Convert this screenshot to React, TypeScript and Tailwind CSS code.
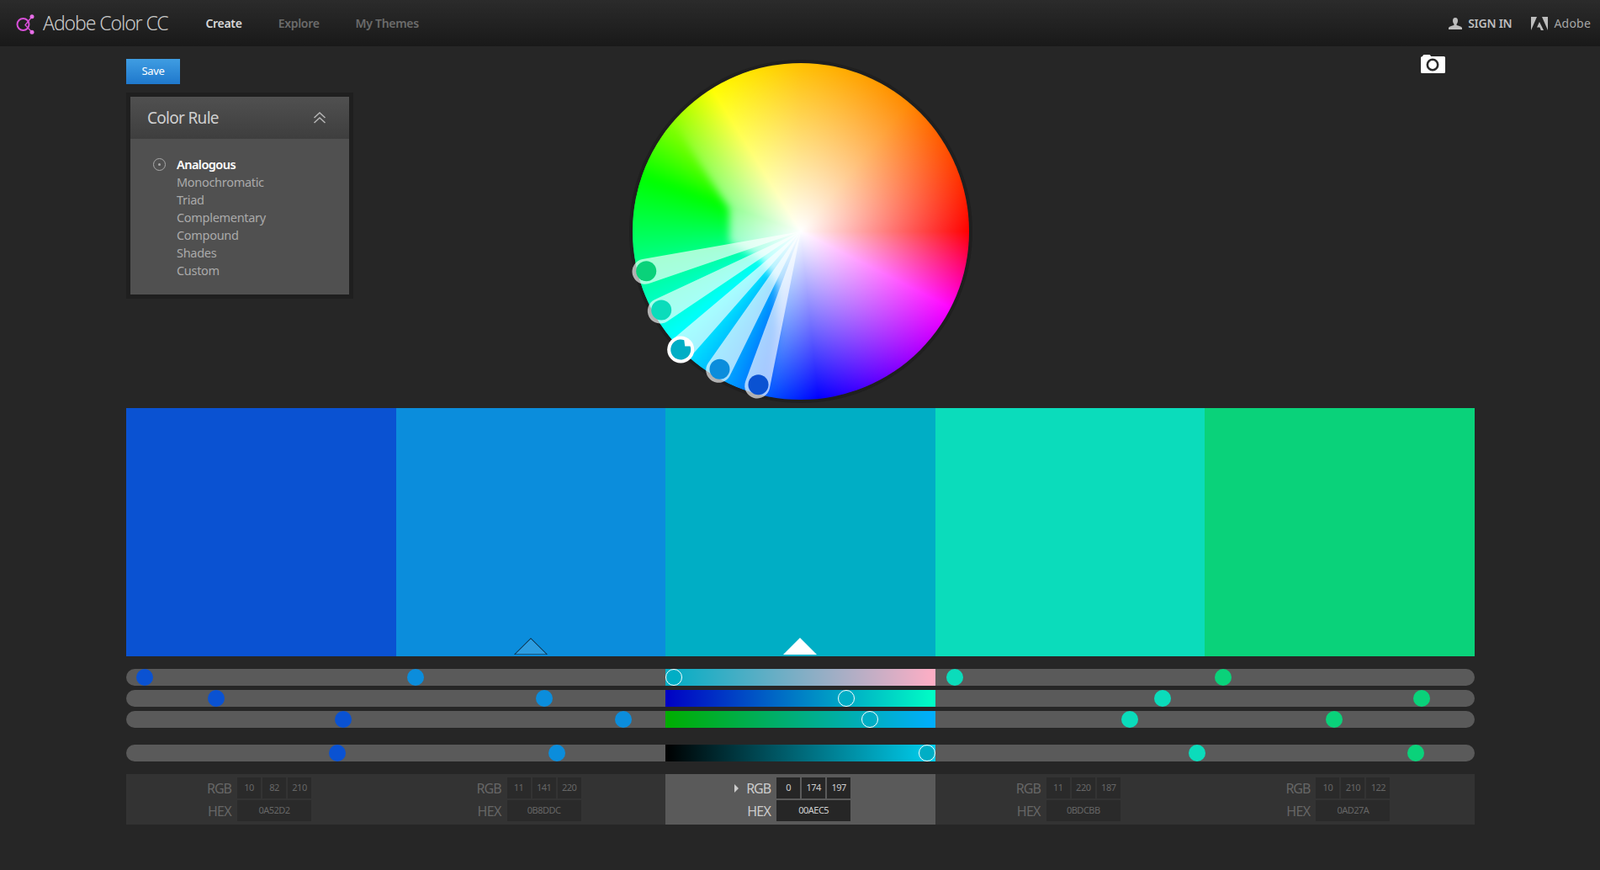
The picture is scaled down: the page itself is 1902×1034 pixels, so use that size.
const CX = 205;
const CY = 205;

// handles, in wheel coordinates (ring = outer circle, dot = colour)
const handles = [
  { ring: [19.5, 252.8], dot: [21.2, 252.2], color: "#0AD27A" },
  { ring: [37.8, 299.5], dot: [39.2, 298.5], color: "#0BDCBB" },
  { ring: [61.8, 345.2], dot: [62.2, 345.5], color: "#00AEC5", active: true },
  { ring: [107.2, 369.8], dot: [108.5, 368.8], color: "#0B8DDC" },
  { ring: [153.2, 388.5], dot: [154.5, 387.2], color: "#0A52D2" },
];

function spokePath(px: number, py: number, r: number) {
  const dx = px - CX;
  const dy = py - CY;
  const d = Math.hypot(dx, dy);
  const a = Math.atan2(dy, dx);
  const al = Math.asin(r / d);
  const len = Math.sqrt(d * d - r * r);
  const x1 = CX + len * Math.cos(a + al);
  const y1 = CY + len * Math.sin(a + al);
  const x2 = CX + len * Math.cos(a - al);
  const y2 = CY + len * Math.sin(a - al);
  return `M${CX} ${CY} L${x1} ${y1} A${r} ${r} 0 1 0 ${x2} ${y2} Z`;
}

function Wheel() {
  return (
    <div className="relative mt-[20px] h-[400px] w-[400px] rounded-full shadow-[0_0_0_4px_#1f1f1f]">
      <div className="absolute inset-0 overflow-hidden rounded-full bg-[conic-gradient(from_0deg,#ffc000_0deg,#ff8800_40deg,#ff0000_90deg,#ff00ff_117deg,#a000ff_139deg,#0000ff_174deg,#00a0ff_206deg,#00ffff_230deg,#00ff90_257deg,#00ff00_289deg,#ffff00_328deg,#ffc000_360deg)]">
        <div className="absolute inset-0 bg-[radial-gradient(circle_closest-side,#ffffff_0%,rgba(255,255,255,0)_100%)]" />
        {/* the saturated patch through the greens and cyans */}
        <div className="absolute inset-0 blur-[5px]">
          <div className="absolute inset-0 bg-[conic-gradient(from_0deg,#ffc000_0deg,#ff8800_40deg,#ff0000_90deg,#ff00ff_117deg,#a000ff_139deg,#0000ff_174deg,#00a0ff_206deg,#00ffff_230deg,#00ff90_257deg,#00ff00_289deg,#ffff00_328deg,#ffc000_360deg)] [clip-path:polygon(0%_19%,13%_19.3%,28.8%_43.4%,28.8%_53.4%,38%_58%,43%_66%,43%_80%,40%_100%,0%_100%)]" />
        </div>
      </div>
      <svg className="absolute -left-[5px] -top-[5px] overflow-visible" width="410" height="410" viewBox="0 0 410 410">
        {handles.map((h) => (
          <path key={h.color} d={spokePath(h.ring[0], h.ring[1], 15)} fill="#fff" fillOpacity={0.65} />
        ))}
        {handles.map((h) =>
          h.active ? (
            <g key={h.color} transform={`translate(${h.dot[0]} ${h.dot[1]})`}>
              <circle r="16" fill="#fff" />
              <path d="M5 -4 L11.3 -4.1 A12 12 0 1 1 4.1 -11.3 Z" fill={h.color} />
            </g>
          ) : (
            <circle key={h.color} cx={h.dot[0]} cy={h.dot[1]} r="12" fill={h.color} />
          )
        )}
      </svg>
    </div>
  );
}

const swatches = ["#0A52D2", "#0B8DDC", "#00AEC5", "#0BDCBB", "#0AD27A"];

const sliders = [
  {
    gradient: "bg-[linear-gradient(to_right,#00aec5,#ffaec5)]",
    knob: 650.5,
    dots: [21.5, 343.8, 984.8, 1304],
    className: "",
  },
  {
    gradient: "bg-[linear-gradient(to_right,#0000c5,#00ffc5)]",
    knob: 856,
    dots: [107, 496.5, 1231.5, 1539.5],
    className: "mt-[5px]",
  },
  {
    gradient: "bg-[linear-gradient(to_right,#00ae00,#00aeff)]",
    knob: 884,
    dots: [257.7, 590.8, 1192.8, 1435.5],
    className: "mt-[5px]",
  },
  {
    gradient: "bg-[linear-gradient(to_right,#000000,#00d0f0)]",
    knob: 952,
    dots: [251, 511.8, 1272.8, 1533],
    className: "mt-[20px]",
  },
];

const dotColors = ["#0A52D2", "#0B8DDC", "#0BDCBB", "#0AD27A"];

const infos = [
  { rgb: ["10", "82", "210"], hex: "0A52D2" },
  { rgb: ["11", "141", "220"], hex: "0B8DDC" },
  { rgb: ["0", "174", "197"], hex: "00AEC5", active: true },
  { rgb: ["11", "220", "187"], hex: "0BDCBB" },
  { rgb: ["10", "210", "122"], hex: "0AD27A" },
];

const rules = ["Monochromatic", "Triad", "Complementary", "Compound", "Shades", "Custom"];

function Slider({ s }: { s: (typeof sliders)[number] }) {
  return (
    <div className={`relative grid h-5 grid-cols-5 rounded-full bg-[#5a5a5a] ${s.className}`}>
      <div className={`col-start-3 h-5 ${s.gradient}`} />
      {s.dots.map((x, i) => (
        <span
          key={i}
          className="absolute top-0 h-5 w-5 -translate-x-1/2 rounded-full"
          style={{ left: x, backgroundColor: dotColors[i] }}
        />
      ))}
      <span
        className="absolute top-0 h-5 w-5 -translate-x-1/2 rounded-full border border-white bg-[#00aec5]"
        style={{ left: s.knob }}
      />
    </div>
  );
}

function Info({ rgb, hex, active }: { rgb: string[]; hex: string; active?: boolean }) {
  const box = active ? "bg-[#262626] text-[#cfcfcf]" : "bg-[#2a2a2a] text-[#666666]";
  const label = active ? "text-[#cccccc]" : "text-[#666666]";
  return (
    <div className={`flex h-[60px] flex-col gap-[2px] pt-[4px] ${active ? "bg-[#5a5a5a]" : "bg-[#333333]"}`}>
      <div className="flex h-[25px] items-center">
        <div className={`relative w-[125px] text-right text-[16px] tracking-[-1px] ${label}`}>
          {active && (
            <span className="absolute left-[82px] top-[7px] h-0 w-0 border-y-[5px] border-l-[5px] border-y-transparent border-l-[#cccccc]" />
          )}
          RGB
        </div>
        <div className="ml-[7px] flex gap-[2px]">
          {rgb.map((v) => (
            <div key={v} className={`flex h-[25px] w-[28px] items-center justify-center text-[11px] tracking-[-0.5px] ${box}`}>
              {v}
            </div>
          ))}
        </div>
      </div>
      <div className="flex h-[25px] items-center">
        <div className={`w-[125px] text-right text-[16px] tracking-[-0.7px] ${label}`}>HEX</div>
        <div className={`ml-[7px] flex h-[25px] w-[88px] items-center justify-center text-[11px] tracking-[-0.5px] ${box}`}>
          {hex}
        </div>
      </div>
    </div>
  );
}

export default function App() {
  return (
    <div className="min-h-screen bg-[#262626] font-['Open_Sans',sans-serif]">
      {/* Top bar */}
      <header className="flex h-[55px] items-center bg-[linear-gradient(to_bottom,#2b2b2b,#191919)] pl-[18px] pr-[11px]">
        <svg width="24" height="26" viewBox="0 0 24 26" className="shrink-0">
          <circle cx="9.5" cy="14" r="7" fill="none" stroke="#d84fd8" strokeWidth="2" />
          <path d="M20 4.7 L12 14.7 L20 23.3" fill="none" stroke="#d84fd8" strokeWidth="1.4" />
          <circle cx="20" cy="4.7" r="2.5" fill="#e86fe8" />
          <circle cx="20" cy="23.3" r="2.5" fill="#e86fe8" />
        </svg>
        <div className="ml-[9px] text-[23px] font-light tracking-[-1.1px] text-[#c9c9c9]">Adobe Color CC</div>
        <nav className="ml-[45px] flex items-center gap-[43px] text-[14px] tracking-[-0.3px]">
          <a className="font-semibold text-[#d8d8d8]">Create</a>
          <a className="font-semibold text-[#6b6b6b]">Explore</a>
          <a className="font-semibold text-[#6b6b6b]">My Themes</a>
        </nav>
        <div className="ml-auto flex items-center">
          <svg width="16" height="14" viewBox="0 0 16 14" fill="#bdbdbd">
            <path d="M8 0 C10.2 0 11 1.6 11 3.6 C11 5.4 10.3 6.8 9.6 7.6 L9.6 9 C12 9.6 15.5 10.6 16 12 L16 14 L0 14 L0 12 C0.5 10.6 4 9.6 6.4 9 L6.4 7.6 C5.7 6.8 5 5.4 5 3.6 C5 1.6 5.8 0 8 0 Z" />
          </svg>
          <span className="ml-[7px] text-[14px] font-semibold tracking-[-0.25px] text-[#bdbdbd]">SIGN IN</span>
          <svg className="ml-[23px]" width="20" height="16" viewBox="0 0 20 16" fill="#bdbdbd">
            <path d="M0 0 H7 L0 16 Z M13 0 H20 V16 Z M10 6 L15 16 H11.8 L10.4 12.6 H7 Z" />
          </svg>
          <span className="ml-[7px] text-[14px] tracking-[0.2px] text-[#a6a6a6]">Adobe</span>
        </div>
      </header>

      <main className="ml-[150px] w-[1603px]">
        {/* Save + rule panel, wheel, camera */}
        <div className="grid h-[430px] grid-cols-[1fr_400px_1fr]">
          <div>
            <button className="mt-[15px] block h-[30px] w-[64px] bg-[linear-gradient(to_bottom,#3f9de2,#1f78cc)] text-[13px] tracking-[-0.3px] text-white">
              Save
            </button>
            <div className="mt-[10px] w-[270px] border-[5px] border-[#1f1f1f] bg-[#505050]">
              <div className="flex h-[50px] items-center justify-between bg-[linear-gradient(to_bottom,#505050,#3e3e3e)] pl-[20px] pr-[27px]">
                <span className="text-[19px] tracking-[-0.7px] text-[#d0d0d0]">Color Rule</span>
                <svg width="16" height="14" viewBox="0 0 16 14" fill="none" stroke="#b5b5b5" strokeWidth="1.5">
                  <path d="M1.5 7 L8 1 L14.5 7 M1.5 13 L8 7 L14.5 13" />
                </svg>
              </div>
              <ul className="h-[185px] pt-[20px] text-[14.5px] leading-[21px] tracking-[-0.3px] text-[#aaaaaa]">
                <li className="relative pl-[55px] font-semibold tracking-[-0.55px] text-white">
                  <span className="absolute left-[27px] top-[3px] flex h-[15px] w-[15px] items-center justify-center rounded-full border-[1.5px] border-[#aaaaaa]">
                    <span className="h-[3px] w-[3px] rounded-full bg-[#aaaaaa]" />
                  </span>
                  Analogous
                </li>
                {rules.map((r) => (
                  <li key={r} className="pl-[55px]">
                    {r}
                  </li>
                ))}
              </ul>
            </div>
          </div>
          <Wheel />
          <div className="flex justify-end pr-[35px]">
            <svg className="mt-[10px]" width="29" height="22" viewBox="0 0 29 22">
              <path d="M2 2 L2.5 1 Q3 0 4 0 H10 Q11 0 11.5 1 L12 2 H27.5 Q29 2 29 3.5 V20.5 Q29 22 27.5 22 H1.5 Q0 22 0 20.5 V3.5 Q0 2 2 2 Z" fill="#fff" />
              <circle cx="14" cy="12" r="6.2" fill="none" stroke="#2a2a2a" strokeWidth="2.6" />
            </svg>
          </div>
        </div>

        {/* Swatches */}
        <div className="grid h-[295px] grid-cols-5">
          {swatches.map((c, i) => (
            <div key={c} className="relative" style={{ backgroundColor: c }}>
              {i === 1 && (
                <svg className="absolute bottom-[2px] left-1/2 -translate-x-1/2" width="40" height="20" viewBox="0 0 40 20">
                  <path d="M20 0.7 L39.5 20 H0.5 Z" fill="#fff" fillOpacity={0.14} stroke="#0b1722" strokeWidth="1" />
                </svg>
              )}
              {i === 2 && (
                <svg className="absolute bottom-[2px] left-1/2 -translate-x-1/2" width="40" height="20" viewBox="0 0 40 20">
                  <path d="M20 0 L40 20 H0 Z" fill="#fff" />
                </svg>
              )}
            </div>
          ))}
        </div>

        {/* Sliders */}
        <div className="mt-[15px]">
          {sliders.map((s) => (
            <Slider key={s.knob} s={s} />
          ))}
        </div>

        {/* Values */}
        <div className="mt-[15px] grid grid-cols-5">
          {infos.map((c) => (
            <Info key={c.hex} {...c} />
          ))}
        </div>
      </main>
    </div>
  );
}
